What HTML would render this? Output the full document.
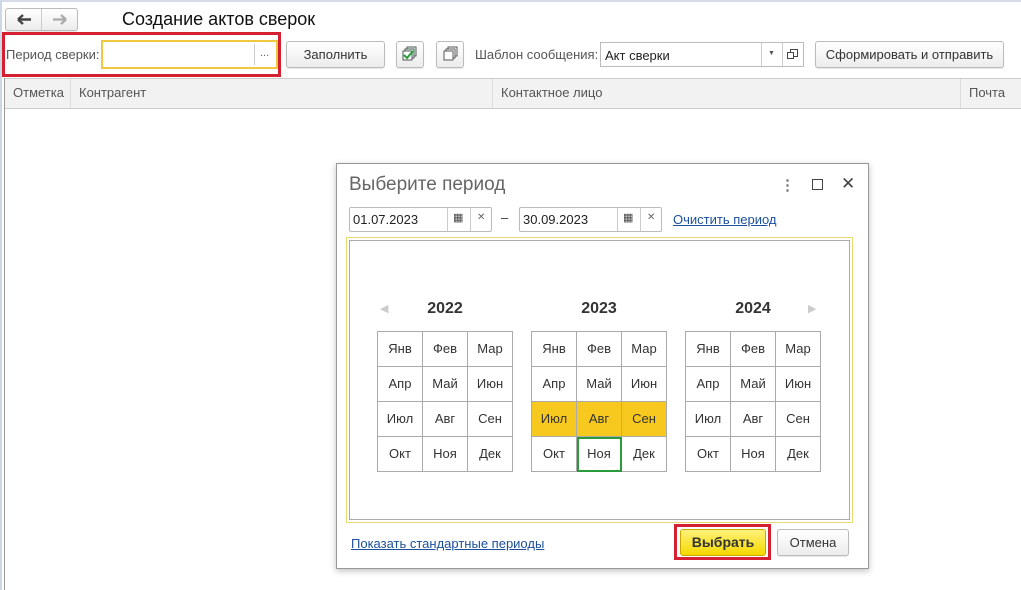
<!DOCTYPE html>
<html><head><meta charset="utf-8"><style>
*{box-sizing:border-box;margin:0;padding:0}
body{width:1021px;height:590px;overflow:hidden;background:#fff;font-family:"Liberation Sans",Arial,sans-serif;font-size:13px;color:#333;position:relative}
.a{position:absolute}
.btn{position:absolute;border:1px solid #bbb;border-radius:3px;background:linear-gradient(#fff,#ececec);text-align:center;color:#333;box-shadow:0 1px 1px rgba(0,0,0,.1)}
.hd{position:absolute;top:79px;height:29px;border-right:1px solid #ddd;background:#f2f2f2;padding:6px 8px;color:#555}
.grid{position:absolute;top:331px;width:136px;height:141px;border-left:1px solid #aaa;border-top:1px solid #aaa}
.grid div{float:left;width:45px;height:35px;border-right:1px solid #aaa;border-bottom:1px solid #aaa;text-align:center;line-height:34px;font-size:13px;color:#333}
.grid div.y{background:#f7c81e}
.grid div.g{outline:2px solid #2a9a3a;outline-offset:-2px;border-color:#2a9a3a}
.yr{position:absolute;top:300px;font-weight:bold;font-size:16px;color:#333;width:136px;text-align:center}
.lnk{color:#1b4f9e;text-decoration:underline}
</style></head><body>
<div class="a" style="left:0;top:0;width:1021px;height:2px;background:#d6dde8"></div>
<div class="a" style="left:0;top:0;width:2px;height:590px;background:#cdd7e6"></div>
<div class="a" style="left:4px;top:78px;width:1px;height:512px;background:#999"></div>
<div class="btn" style="left:5px;top:8px;width:73px;height:23px;padding:0"><span class="a" style="left:0;top:0;width:36px;height:21px;border-right:1px solid #ccc"><svg width="36" height="21"><path d="M12 10.5h13M12 10.5l5-4.5M12 10.5l5 4.5" stroke="#444" stroke-width="2.4" fill="none"/></svg></span><span class="a" style="left:36px;top:0;width:36px;height:21px"><svg width="36" height="21"><path d="M11 10.5h13M24 10.5l-5-4.5M24 10.5l-5 4.5" stroke="#aaa" stroke-width="2.2" fill="none"/></svg></span></div>
<div class="a" style="left:122px;top:9px;font-size:18px;color:#111">Создание актов сверок</div>
<div class="a" style="left:2px;top:32px;width:279px;height:45px;border:3px solid #d42030"></div>
<div class="a" style="left:6px;top:47px;color:#555">Период сверки:</div>
<div class="a" style="left:101px;top:40px;width:177px;height:29px;border:2px solid #f0c840;background:#fff"><span class="a" style="left:151px;top:2px;width:1px;height:21px;background:#ccc"></span><span class="a" style="left:157px;top:5px;color:#666;font-size:11px">...</span></div>
<div class="btn" style="left:286px;top:41px;width:99px;height:27px;line-height:25px">Заполнить</div>
<div class="btn" style="left:396px;top:41px;width:28px;height:27px"><svg width="26" height="25" viewBox="0 0 26 25"><rect x="10" y="5" width="9" height="9" fill="#dfe" stroke="#555"/><rect x="8" y="7" width="9" height="9" fill="#dfe" stroke="#555"/><rect x="6" y="9" width="9" height="9" fill="#fff" stroke="#555"/><path d="M7 13l3 3 6-7" stroke="#2a9a3a" stroke-width="2" fill="none"/></svg></div>
<div class="btn" style="left:436px;top:41px;width:28px;height:27px"><svg width="26" height="25" viewBox="0 0 26 25"><rect x="11" y="5" width="9" height="9" fill="#fff" stroke="#555"/><rect x="9" y="7" width="9" height="9" fill="#fff" stroke="#555"/><rect x="7" y="9" width="9" height="9" fill="#fff" stroke="#555"/></svg></div>
<div class="a" style="left:475px;top:47px;color:#555">Шаблон сообщения:</div>
<div class="a" style="left:600px;top:42px;width:204px;height:25px;border:1px solid #bbb;background:#fff"><span class="a" style="left:4px;top:5px;color:#222">Акт сверки</span><span class="a" style="left:160px;top:0;width:1px;height:23px;background:#ccc"></span><span class="a" style="left:167px;top:7px;font-size:7px;color:#555">▼</span><span class="a" style="left:181px;top:0;width:1px;height:23px;background:#ccc"></span><svg class="a" style="left:186px;top:6px" width="11" height="11"><rect x="3.5" y="0.5" width="7" height="7" fill="none" stroke="#444"/><rect x="0.5" y="3.5" width="6" height="6" fill="#fff" stroke="#444"/></svg></div>
<div class="btn" style="left:815px;top:41px;width:189px;height:27px;line-height:25px">Сформировать и отправить</div>
<div class="a" style="left:5px;top:78px;width:1016px;height:1px;background:#ccc"></div>
<div class="a" style="left:5px;top:108px;width:1016px;height:1px;background:#ccc"></div>
<div class="hd" style="left:5px;width:66px">Отметка</div>
<div class="hd" style="left:71px;width:422px">Контрагент</div>
<div class="hd" style="left:493px;width:468px">Контактное лицо</div>
<div class="hd" style="left:961px;width:60px;border-right:0">Почта</div>

<div class="a" style="left:336px;top:163px;width:533px;height:406px;border:1px solid #999;background:#fff;box-shadow:0 2px 6px rgba(0,0,0,.25)"></div>
<div class="a" style="left:349px;top:174px;font-size:19px;color:#666">Выберите период</div>
<div class="a" style="left:780px;top:176px;font-size:15px;color:#777;font-weight:bold">⋮</div>
<div class="a" style="left:812px;top:179px;width:11px;height:11px;border:1.5px solid #444"></div>
<div class="a" style="left:841px;top:174px;font-size:17px;color:#444">✕</div>
<div class="a" style="left:349px;top:207px;width:143px;height:25px;border:1px solid #bbb;border-radius:2px"><span class="a" style="left:3px;top:4px;color:#222">01.07.2023</span><span class="a" style="left:97px;top:0;width:1px;height:23px;background:#ccc"></span><span class="a" style="left:103px;top:3px;font-size:11px;color:#444">▦</span><span class="a" style="left:120px;top:0;width:1px;height:23px;background:#ccc"></span><span class="a" style="left:127px;top:4px;font-size:10px;color:#666">✕</span></div>
<div class="a" style="left:501px;top:210px;color:#333">–</div>
<div class="a" style="left:519px;top:207px;width:143px;height:25px;border:1px solid #bbb;border-radius:2px"><span class="a" style="left:3px;top:4px;color:#222">30.09.2023</span><span class="a" style="left:97px;top:0;width:1px;height:23px;background:#ccc"></span><span class="a" style="left:103px;top:3px;font-size:11px;color:#444">▦</span><span class="a" style="left:120px;top:0;width:1px;height:23px;background:#ccc"></span><span class="a" style="left:127px;top:4px;font-size:10px;color:#666">✕</span></div>
<div class="a lnk" style="left:673px;top:212px">Очистить период</div>
<div class="a" style="left:346px;top:237px;width:507px;height:286px;border:1px solid #e8d870"></div>
<div class="a" style="left:349px;top:240px;width:501px;height:280px;border:1px solid #aaa"></div>
<div class="a" style="left:380px;top:302px;font-size:11px;color:#ccc">◀</div>
<div class="a" style="left:808px;top:302px;font-size:11px;color:#ccc">▶</div>
<div class="yr" style="left:377px">2022</div>
<div class="yr" style="left:531px">2023</div>
<div class="yr" style="left:685px">2024</div>
<div class="grid" style="left:377px"><div>Янв</div><div>Фев</div><div>Мар</div><div>Апр</div><div>Май</div><div>Июн</div><div>Июл</div><div>Авг</div><div>Сен</div><div>Окт</div><div>Ноя</div><div>Дек</div></div>
<div class="grid" style="left:531px"><div>Янв</div><div>Фев</div><div>Мар</div><div>Апр</div><div>Май</div><div>Июн</div><div class="y">Июл</div><div class="y">Авг</div><div class="y">Сен</div><div>Окт</div><div class="g">Ноя</div><div>Дек</div></div>
<div class="grid" style="left:685px"><div>Янв</div><div>Фев</div><div>Мар</div><div>Апр</div><div>Май</div><div>Июн</div><div>Июл</div><div>Авг</div><div>Сен</div><div>Окт</div><div>Ноя</div><div>Дек</div></div>
<div class="a lnk" style="left:351px;top:536px">Показать стандартные периоды</div>
<div class="a" style="left:674px;top:524px;width:97px;height:36px;border:3px solid #d42030"></div>
<div class="a" style="left:680px;top:529px;width:86px;height:27px;border:1px solid #c8a800;border-radius:3px;background:linear-gradient(#fff27a,#f5d800);text-align:center;line-height:25px;font-size:14px;font-weight:bold;color:#333">Выбрать</div>
<div class="btn" style="left:777px;top:529px;width:72px;height:27px;line-height:25px">Отмена</div>
</body></html>
